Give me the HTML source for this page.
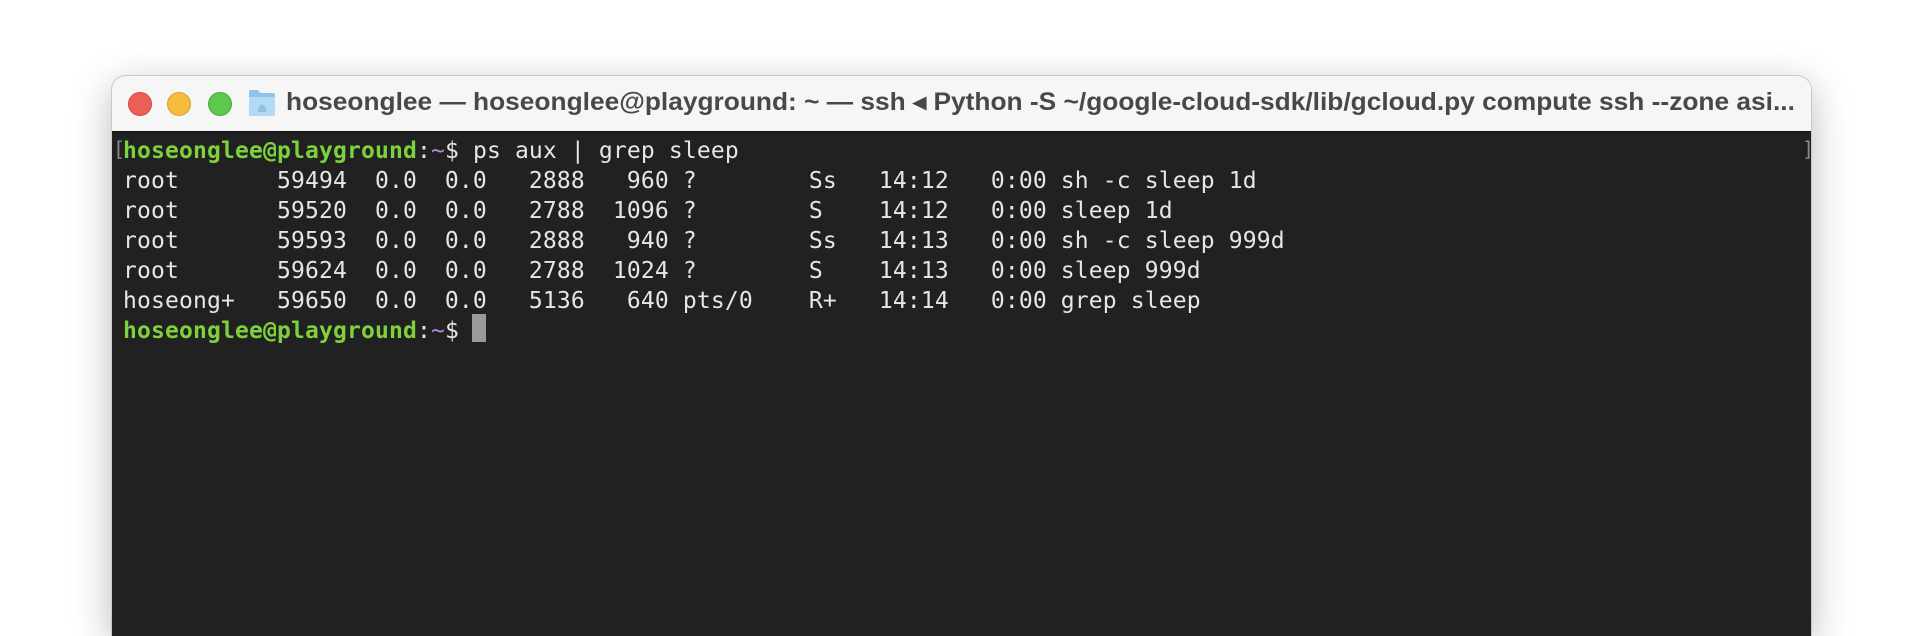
<!DOCTYPE html>
<html><head><meta charset="utf-8"><style>
html,body{margin:0;padding:0;width:1924px;height:598px;background:#fff;overflow:hidden}
.win{position:absolute;left:112px;top:76px;width:1699px;height:560px;border-radius:14px 14px 0 0;overflow:hidden;box-shadow:0 0 0 1px #c9c9c9,0 10px 40px rgba(0,0,0,0.28)}
.tb{position:absolute;left:0;top:0;right:0;height:55px;background:#f6f6f6;border-bottom:1px solid #111}
.dot{position:absolute;top:16px;width:22px;height:22px;border-radius:50%}
.title{position:absolute;left:174px;top:11px;font:bold 25px "Liberation Sans",sans-serif;color:#484848;white-space:nowrap;transform-origin:0 0;transform:scaleX(1.052)}
.term{position:absolute;left:0;top:56px;right:0;bottom:0;background:#212121}
pre{position:absolute;left:11px;top:4px;margin:0;font:23px/30px "DejaVu Sans Mono",monospace;letter-spacing:0.15px;color:#e6e6e6}
.g{color:#7dd13c;font-weight:bold}.p{color:#b48ad8}
.br{position:absolute;top:2px;font:20px/30px "DejaVu Sans Mono",monospace;color:#8a8a8a}
.cur{position:absolute;left:360px;top:182px;width:14px;height:28px;background:#9a9a9a}
</style></head><body>
<div class="win">
 <div class="tb">
  <div class="dot" style="left:16px;background:#ee5f57;border:0.5px solid #d1483f"></div>
  <div class="dot" style="left:55px;background:#f6bc3e;border:0.5px solid #d9a02c"></div>
  <div class="dot" style="left:96px;background:#5fc650;border:0.5px solid #4aa93c"></div>
  <svg style="position:absolute;left:136px;top:12px" width="28" height="29" viewBox="0 0 28 29">
   <path d="M1 4 Q1 2 3 2 H10 L12 5 H25 Q27 5 27 7 V26 Q27 28 25 28 H3 Q1 28 1 26Z" fill="#8ec3ea"/>
   <path d="M1 9 H27 V26 Q27 28 25 28 H3 Q1 28 1 26Z" fill="#b3d9f5"/>
   <path d="M10 20 L14 16 L18 20 V24 H10Z" fill="#8fbfe3"/>
  </svg>
  <div class="title">hoseonglee — hoseonglee@playground: ~ — ssh ◂ Python -S ~/google-cloud-sdk/lib/gcloud.py compute ssh --zone asi...</div>
 </div>
 <div class="term">
  <div class="br" style="left:1px">[</div>
  <div class="br" style="left:1690px">]</div>
<pre><span class="g">hoseonglee@playground</span>:<span class="p">~</span>$ ps aux | grep sleep
root       59494  0.0  0.0   2888   960 ?        Ss   14:12   0:00 sh -c sleep 1d
root       59520  0.0  0.0   2788  1096 ?        S    14:12   0:00 sleep 1d
root       59593  0.0  0.0   2888   940 ?        Ss   14:13   0:00 sh -c sleep 999d
root       59624  0.0  0.0   2788  1024 ?        S    14:13   0:00 sleep 999d
hoseong+   59650  0.0  0.0   5136   640 pts/0    R+   14:14   0:00 grep sleep
<span class="g">hoseonglee@playground</span>:<span class="p">~</span>$ </pre>
  <div class="cur"></div>
 </div>
</div>
</body></html>
